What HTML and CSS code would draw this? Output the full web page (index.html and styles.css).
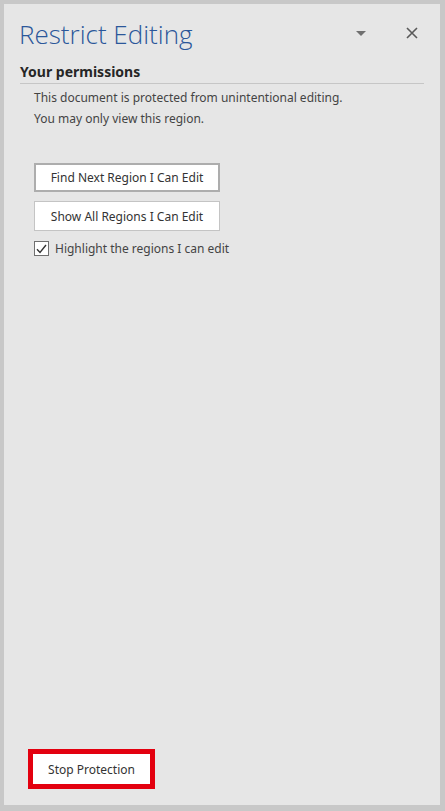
FILE: index.html
```html
<!DOCTYPE html>
<html lang="en">
<head>
    <meta charset="UTF-8">
    <meta name="viewport" content="width=device-width, initial-scale=1.0">
    <title>Restrict Editing</title>
    <link rel="stylesheet" href="styles.css">
</head>
<body>
    <div class="pane">
        <div class="pane-header">
            <h1 class="pane-title">Restrict Editing</h1>
            <div class="pane-controls">
                <span class="menu-arrow"></span>
                <svg class="close-icon" width="12" height="12" viewBox="0 0 12 12">
                    <path d="M1 1 L11 11 M11 1 L1 11" stroke="#5a5a5a" stroke-width="1.6" fill="none"/>
                </svg>
            </div>
        </div>

        <div class="section">
            <h2 class="section-title">Your permissions</h2>
            <div class="section-body">
                <p class="info">This document is protected from unintentional editing.</p>
                <p class="info">You may only view this region.</p>

                <div class="actions">
                    <button class="btn btn-focus">Find Next Region I Can Edit</button>
                    <button class="btn">Show All Regions I Can Edit</button>
                    <label class="check">
                        <span class="check-box">
                            <svg width="11" height="10" viewBox="0 0 11 10">
                                <path d="M1 5.2 L4 8.4 L10 1" stroke="#333" stroke-width="1.4" fill="none"/>
                            </svg>
                        </span>
                        Highlight the regions I can edit
                    </label>
                </div>
            </div>
        </div>

        <div class="pane-footer">
            <div class="highlight">
                <button class="btn btn-stop">Stop Protection</button>
            </div>
        </div>
    </div>
</body>
</html>
```

FILE: styles.css
```css
* {
    margin: 0;
    padding: 0;
    box-sizing: border-box;
}

body {
    background-color: #c8c8c8;
    font-family: 'Noto Sans', 'Open Sans', sans-serif;
    color: #444;
    padding: 4px 5px 6px 4px;
    height: 811px;
}

.pane {
    background-color: #e6e6e6;
    height: 801px;
    display: flex;
    flex-direction: column;
    padding: 0 16px 0 16px;
}

.pane-header {
    display: flex;
    align-items: center;
    justify-content: space-between;
    height: 58px;
}

.pane-title {
    font-family: 'Open Sans', sans-serif;
    font-weight: 300;
    font-size: 26px;
    color: #2b579a;
    margin-left: -1px;
    margin-top: 2px;
}

.pane-controls {
    display: flex;
    align-items: center;
    gap: 40px;
    margin-right: 6px;
}

.menu-arrow {
    width: 0;
    height: 0;
    border-left: 5px solid transparent;
    border-right: 5px solid transparent;
    border-top: 5px solid #707070;
}

.section-title {
    font-size: 14px;
    font-weight: 700;
    color: #262626;
    padding-bottom: 2px;
    border-bottom: 1px solid #c6c6c6;
    line-height: 19px;
}

.section-body {
    padding-left: 14px;
    padding-top: 3px;
}

.info {
    font-size: 12px;
    line-height: 21px;
    color: #444;
}

.actions {
    display: flex;
    flex-direction: column;
    align-items: flex-start;
    gap: 9px;
    margin-top: 34px;
}

.btn {
    font-family: 'Noto Sans', 'Open Sans', sans-serif;
    font-size: 12px;
    color: #333;
    background: #fff;
    border: 1px solid #c4c4c4;
    width: 186px;
    height: 30px;
    text-align: center;
}

.btn-focus {
    border: 2px solid #adadad;
    height: 29px;
}

.check {
    display: flex;
    align-items: center;
    gap: 6px;
    font-size: 12px;
    color: #444;
    margin-top: 0;
}

.check-box {
    width: 15px;
    height: 15px;
    border: 1px solid #6f6f6f;
    background: #fff;
    display: flex;
    align-items: center;
    justify-content: center;
}

.pane-footer {
    margin-top: auto;
    padding-bottom: 16px;
    margin-left: -16px;
    padding-left: 24px;
}

.highlight {
    display: inline-block;
    border: 4px solid #e3000f;
    padding: 1px;
    background: #e3000f;
}

.btn-stop {
    width: 117px;
    height: 30px;
    border: none;
    display: block;
}
```
